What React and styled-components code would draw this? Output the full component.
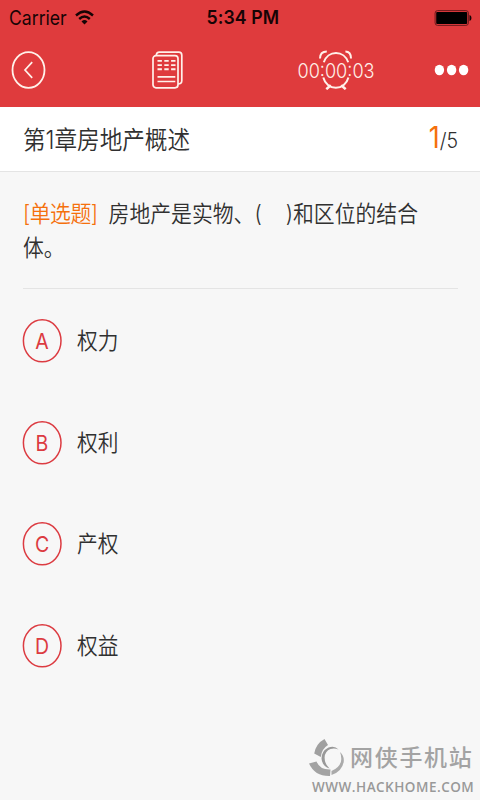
import React from "react";
import styled, { createGlobalStyle } from "styled-components";

const GlobalStyle = createGlobalStyle`
  * { box-sizing: border-box; }
  body { margin: 0; background: #f7f7f7; }
`;

const Screen = styled.div`
  width: 480px;
  height: 800px;
  display: flex;
  flex-direction: column;
  overflow: hidden;
  background: #f7f7f7;
  color: #303030;
  font-family: Inter, "Noto Sans CJK SC", sans-serif;
  font-weight: 350;
`;

const Header = styled.header`
  height: 107px;
  flex: none;
  background: #df3b3d;
`;

const StatusBar = styled.div`
  height: 35px;
  display: grid;
  grid-template-columns: 1fr auto 1fr;
  align-items: center;
  padding: 0 8px 0 9px;
  color: #170405;
`;

const Carrier = styled.div`
  display: flex;
  align-items: center;
  gap: 8px;
`;

const Label = styled.span`
  display: inline-block;
  white-space: pre;
  font-size: ${(p) => p.$size}px;
  line-height: ${(p) => p.$line || 24}px;
  font-weight: ${(p) => p.$weight || 350};
  letter-spacing: ${(p) => p.$track || 0}px;
  transform: scaleY(${(p) => p.$stretch || 1.12});
`;

const Clock = styled(Label)`
  margin-left: 2px;
  margin-bottom: 1px;
`;

const BatterySlot = styled.div`
  display: flex;
  justify-content: flex-end;
`;

const NavBar = styled.nav`
  height: 70px;
  display: flex;
  align-items: center;
  padding: 0 11px;
`;

const NavButton = styled.button`
  display: flex;
  padding: 0;
  border: 0;
  background: none;
  margin-left: ${(p) => p.$before || 0}px;
`;

const Timer = styled.div`
  display: grid;
  place-items: center;
  width: 80px;
  margin-left: 112px;
  color: #fff1ea;
  > * { grid-area: 1 / 1; }
`;

const ChapterBar = styled.section`
  height: 65px;
  flex: none;
  display: flex;
  align-items: center;
  justify-content: space-between;
  padding: 0 22px 0 23px;
  background: #fff;
  border-bottom: 1px solid #e4e4e4;
`;

const Chapter = styled(Label)`
  margin-top: 2px;
`;

const Progress = styled.div`
  display: flex;
  align-items: baseline;
`;

const Current = styled(Label)`
  color: #f5700c;
`;

const Question = styled.section`
  flex: none;
  height: 117px;
  margin: 0 22px 0 23px;
  padding-top: 26px;
  border-bottom: 1px solid #e4e4e4;
`;

const QuestionText = styled.p`
  margin: 0;
  font-size: 20.85px;
  line-height: 29.5px;
  white-space: pre;
  transform: scaleY(1.11);
  transform-origin: top;
`;

const Kind = styled.span`
  color: #f5700c;
  margin-right: 11px;
  letter-spacing: -0.5px;
`;

const Blank = styled.span`
  display: inline-block;
  width: 24px;
`;

const Options = styled.ul`
  list-style: none;
  margin: 30px 0 0;
  padding: 0 22px;
  display: flex;
  flex-direction: column;
  gap: 57.7px;
`;

const Option = styled.li`
  display: flex;
  align-items: center;
  height: 44px;
  gap: 15px;
`;

const Badge = styled.span`
  display: grid;
  place-items: center;
  width: 40px;
  height: 44px;
  color: #dc3b41;
  > * { grid-area: 1 / 1; }
`;

const Watermark = styled.footer`
  margin: auto 5px 3px 0;
  align-self: flex-end;
  width: 166px;
  color: #a3a3a3;
`;

const Brand = styled.div`
  display: flex;
  align-items: center;
  height: 40px;
  gap: 5px;
`;

const Site = styled.div`
  padding-left: 3px;
  font: 600 13.5px/19px "Open Sans", sans-serif;
  letter-spacing: 0.5px;
  white-space: nowrap;
  color: #999;
`;

const WifiIcon = () => (
  <svg width="19" height="15" viewBox="0 0 19 15" fill="none" stroke="#170405" strokeWidth="2.4">
    <path d="M1 5.5Q9.5-2.3 18 5.5" />
    <path d="M4.2 9Q9.5 4.1 14.8 9" />
    <path d="M6.5 11.4Q9.5 8.8 12.5 11.4L9.5 14.6Z" fill="#170405" stroke="none" />
  </svg>
);

const BatteryIcon = () => (
  <svg width="38" height="16" viewBox="0 0 38 16">
    <rect x="1.1" y=".6" width="33.3" height="14.8" rx="2.5" fill="none" stroke="#6b1a1c" strokeWidth="1" />
    <rect x="2.2" y="2" width="31" height="12" rx="1" fill="#000" />
    <path d="M35.5 5Q37.5 5.5 37.5 8T35.5 11Z" fill="#170405" />
  </svg>
);

const BackIcon = () => (
  <svg width="35" height="38" viewBox="0 0 35 38" fill="none" stroke="#fff1ea" strokeWidth="1.8">
    <ellipse cx="17.5" cy="19" rx="16" ry="17.8" />
    <path d="M21.2 11.2L14 19L21.2 26.8" strokeWidth="1.7" />
  </svg>
);

const SheetIcon = () => (
  <svg width="32" height="38" viewBox="0 0 32 38" fill="none" stroke="#fff1ea" strokeWidth="1.7">
    <rect x="2" y="4.6" width="25" height="32.2" rx="3" />
    <path d="M5.3 4.3V3.9Q5.8 1.2 8.3 1.2H27.8Q30.8 1.2 30.8 4.2V29.5Q30.8 33 27 33" />
    <path d="M6.5 9.9H24.5M6.5 14.1H24.5M6.5 18.2H24.5" strokeWidth="1.9" strokeDasharray="4.4 2.4" />
    <path d="M6.5 25.9H24.3M6.5 30.5H24.3" strokeWidth="1.6" />
  </svg>
);

const ClockIcon = () => (
  <svg width="34" height="40" viewBox="0 0 34 40" fill="none" stroke="#fff1ea" strokeWidth="2">
    <path d="M5.8 12.2A13 14 0 0 1 30.2 12.2M5.3 27.5A13 14 0 0 0 30.4 27.5" />
    <path d="M2 8.5Q2 1.5 8.8 1.5M27.4 1.5Q33 1.5 33 8.5" />
    <path d="M8.3 39.2L12.8 35.2M27.7 39.2L23.2 35.2" strokeWidth="2.5" />
  </svg>
);

const MoreIcon = () => (
  <svg width="35" height="12" viewBox="0 0 35 12" fill="#fff">
    <ellipse cx="5.4" cy="6" rx="4.7" ry="5.3" />
    <ellipse cx="17.6" cy="6" rx="4.7" ry="5.3" />
    <ellipse cx="29.6" cy="6" rx="4.7" ry="5.3" />
  </svg>
);

const Ring = () => (
  <svg width="40" height="44" viewBox="0 0 40 44" fill="none" stroke="#dc3b41" strokeWidth="1.5">
    <ellipse cx="20.2" cy="21.8" rx="18.8" ry="21" />
  </svg>
);

const BrandMark = () => (
  <svg width="36" height="38" viewBox="0 0 36 38">
    <path d="M15.5 0L19 6Q12.5 10 11.8 18L5.2 14.5Q7 4.5 15.5 0Z" fill="#a0a0a0" />
    <path d="M0 24.5L7.5 22.5Q11 31 21.5 30.5L21 37Q6 37.5 0 24.5Z" fill="#a3a3a3" />
    <path d="M22.5 32Q32 28 32.3 20Q32.3 16 31 13Q35.5 17 34.7 23Q33 32.5 22.5 36Z" fill="#aaa" />
    <path d="M29.5 10.5Q25.5 6.2 19.5 8.5Q12.5 12 12.5 19.5Q13 27 20.5 29.5Q15.5 25 15.6 18.5Q16 12 21.5 10Q25.5 8.8 29.5 10.5Z" fill="#999" />
  </svg>
);

const options = [
  ["A", "权力"],
  ["B", "权利"],
  ["C", "产权"],
  ["D", "权益"],
];

export default function App() {
  return (
    <Screen>
      <GlobalStyle />
      <Header>
        <StatusBar>
          <Carrier>
            <Label $size={17.6} $weight={400} $stretch={1.12}>Carrier</Label>
            <WifiIcon />
          </Carrier>
          <Label $size={17.7} $weight={600} $stretch={1.08} $track={0.1}> 5:34 PM</Label>
          <BatterySlot><BatteryIcon /></BatterySlot>
        </StatusBar>
        <NavBar>
          <NavButton aria-label="Back"><BackIcon /></NavButton>
          <NavButton aria-label="Answer sheet" $before={105}><SheetIcon /></NavButton>
          <Timer>
            <ClockIcon />
            <Clock $size={18.1} $weight={300} $stretch={1.08}>00:00:03</Clock>
          </Timer>
          <NavButton aria-label="More" $before={59}><MoreIcon /></NavButton>
        </NavBar>
      </Header>
      <ChapterBar>
        <Chapter $size={22.6}>第1章房地产概述</Chapter>
        <Progress>
          <Current $size={27} $weight={400} $stretch={1.1}>1</Current>
          <Label $size={19.5} $stretch={1.08}>/5</Label>
        </Progress>
      </ChapterBar>
      <Question>
        <QuestionText>
          <Kind>[单选题]</Kind>房地产是实物、(<Blank />)和区位的结合{"\n"}体。
        </QuestionText>
      </Question>
      <Options>
        {options.map(([letter, text]) => (
          <Option key={letter}>
            <Badge><Ring /><Label $size={19.5} $weight={400}>{letter}</Label></Badge>
            <Label $size={20.7}>{text}</Label>
          </Option>
        ))}
      </Options>
      <Watermark>
        <Brand>
          <BrandMark />
          <Label $size={23} $weight={500} $stretch={0.97} $track={1.7}>网侠手机站</Label>
        </Brand>
        <Site>WWW.HACKHOME.COM</Site>
      </Watermark>
    </Screen>
  );
}
